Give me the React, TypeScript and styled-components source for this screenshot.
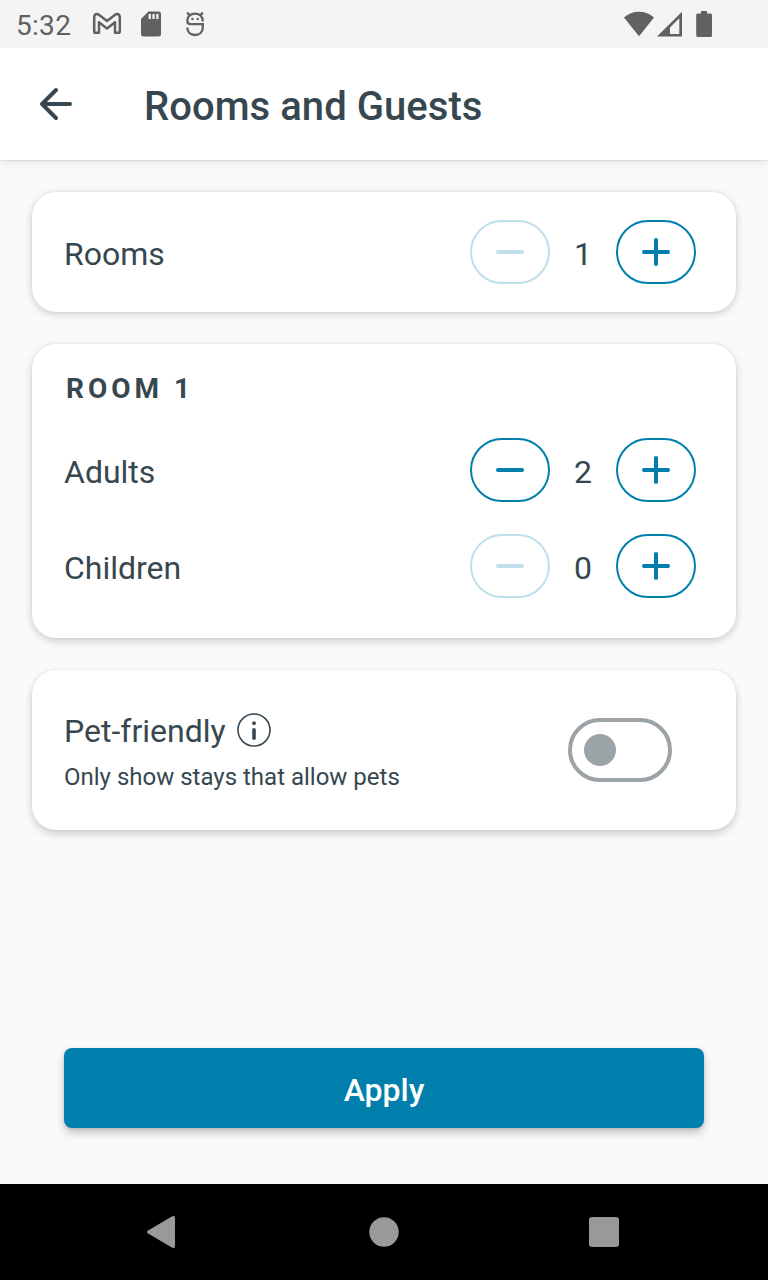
import React, { useState } from "react";
import styled, { createGlobalStyle, css } from "styled-components";

const ink = "#37474f";
const brand = "#007fad";
const statusInk = "#616161";

const GlobalStyle = createGlobalStyle`
  * { box-sizing: border-box; }
  body {
    margin: 0;
    background: #fafafa;
    color: ${ink};
    font-family: Roboto, "Liberation Sans", sans-serif;
  }
  button { font: inherit; padding: 0; cursor: pointer; }
  svg { display: block; }
`;

const Screen = styled.div`
  display: flex;
  flex-direction: column;
  width: 768px;
  height: 1280px;
  overflow: hidden;
`;

const StatusBar = styled.div`
  z-index: 1;
  display: flex;
  flex: none;
  justify-content: space-between;
  height: 48px;
  background: #f4f4f4;
  color: ${statusInk};
`;

const StatusGroup = styled.div<{ $end?: boolean }>`
  display: flex;
  align-items: center;
  padding: ${(p) => (p.$end ? "0 54px 0 0" : "0 0 0 16px")};
`;

const Clock = styled.span`
  width: 74px;
  padding-top: 4px;
  font-size: 28px;
  line-height: 34px;
  letter-spacing: 0.3px;
`;

const Header = styled.header`
  display: flex;
  flex: none;
  align-items: center;
  height: 112px;
  padding-left: 32px;
  background: #fff;
  box-shadow: 0 1px 1px rgba(0, 0, 0, 0.07), 0 2px 10px rgba(0, 0, 0, 0.09);
`;

const BackButton = styled.button`
  width: 48px;
  height: 48px;
  border: 0;
  background: none;
  color: ${ink};
`;

const Title = styled.h1`
  margin: 0 0 0 64px;
  padding-top: 6px;
  font-size: 40px;
  line-height: 48px;
  font-weight: 500;
  letter-spacing: 0.05px;
`;

const Content = styled.main`
  display: flex;
  flex: 1;
  flex-direction: column;
  gap: 32px;
  padding: 32px 32px 0;
`;

const Card = styled.section<{ $depth?: number }>`
  padding: 0 40px 0 32px;
  border-radius: 24px;
  background: #fff;
  box-shadow: 0 0 2px rgba(0, 0, 0, 0.09),
    0 ${(p) => p.$depth ?? 3}px 9px rgba(0, 0, 0, 0.18);
`;

const RoomsCard = styled(Card)`
  padding-top: 12px;
  padding-bottom: 12px;
`;

const RoomCard = styled(Card)`
  height: 294px;
  padding-top: 29px;
`;

const PetCard = styled(Card)`
  display: flex;
  align-items: center;
  justify-content: space-between;
  height: 160px;
  padding-right: 64px;
`;

const RoomTitle = styled.h2`
  margin: 0 0 17px 2px;
  font-size: 28px;
  line-height: 32px;
  font-weight: 700;
  letter-spacing: 4px;
`;

const CounterRow = styled.div`
  display: flex;
  align-items: center;
  justify-content: space-between;
  height: 96px;
`;

const Label = styled.span`
  padding-top: 4px;
  font-size: 32px;
  line-height: 38px;
`;

const Stepper = styled.div`
  display: flex;
  align-items: center;
`;

const Count = styled(Label)`
  width: 66px;
  text-align: center;
`;

const StepButton = styled.button`
  display: grid;
  place-items: center;
  width: 80px;
  height: 64px;
  border: 2px solid currentColor;
  border-radius: 32px;
  background: #fff;
  color: ${brand};
  &:disabled {
    color: #bfdfea;
    cursor: default;
  }
`;

const PetText = styled.div`
  display: flex;
  flex-direction: column;
  gap: 13px;
`;

const PetHeading = styled.div`
  display: flex;
  align-items: center;
  gap: 10px;
`;

const PetLabel = styled(Label)`
  padding-top: 2px;
`;

const Hint = styled.p`
  margin: 0;
  font-size: 24px;
  line-height: 28px;
`;

const Switch = styled.button<{ $on: boolean }>`
  display: flex;
  align-items: center;
  width: 104px;
  height: 64px;
  padding: 0 12px;
  border: 4px solid currentColor;
  border-radius: 32px;
  background: #fff;
  color: #9ba3a7;
  ${(p) =>
    p.$on &&
    css`
      justify-content: flex-end;
      color: ${brand};
    `}
`;

const Knob = styled.span`
  width: 32px;
  height: 32px;
  border-radius: 50%;
  background: currentColor;
`;

const Footer = styled.footer`
  flex: none;
  padding: 0 64px 56px;
`;

const ApplyButton = styled.button`
  width: 100%;
  height: 80px;
  padding-top: 4px;
  border: 0;
  border-radius: 8px;
  background: ${brand};
  color: #fff;
  font-size: 32px;
  font-weight: 500;
  box-shadow: 0 1px 3px rgba(0, 0, 0, 0.1), 0 5px 10px rgba(0, 0, 0, 0.22);
`;

const NavBar = styled.nav`
  display: flex;
  flex: none;
  align-items: center;
  justify-content: space-between;
  height: 96px;
  padding: 0 140px;
  background: #000;
`;

const NotificationIcons = () => (
  <svg width="120" height="48" viewBox="90 0 120 48" fill="none">
    <path
      d="M94.2 17.2C94.2 14.1 96.8 13.2 98.9 14.8L107 21L115.1 14.8C117.2 13.2 119.8 14.1 119.8 17.2V31.5Q119.8 32.8 118.5 32.8H115V22.3L107 28.4L99 22.3V32.8H95.5Q94.2 32.8 94.2 31.5Z"
      stroke="currentColor"
      strokeWidth="2.5"
      strokeLinejoin="round"
    />
    <path
      d="M148.4 11.5H158.5Q161 11.5 161 14V34Q161 36.5 158.5 36.5H143.5Q141 36.5 141 34V18.9Z"
      fill="currentColor"
    />
    <path d="M148.6 14h2.3v5h-2.3zM152.4 14h2.3v5h-2.3zM156.2 14h2.3v5h-2.3z" fill="#f4f4f4" />
    <g stroke="currentColor" strokeWidth="2.3">
      <path d="M202.8 21.4C202.8 16.5 199.5 13.6 195 13.6S187.3 16.5 187.3 20.5Q187.3 24.2 190.5 24.2H202.8V27.5C202.8 32.2 199.5 35 195 35S187.3 32.2 187.3 27.6" />
      <path d="M187.1 12.6L190 15.6M202.9 12.6L200 15.6" />
    </g>
    <circle cx="192.4" cy="19" r="1.2" fill="currentColor" />
    <circle cx="197.7" cy="19" r="1.2" fill="currentColor" />
  </svg>
);

const SystemIcons = () => (
  <svg width="94" height="48" viewBox="620 0 94 48" fill="currentColor">
    <path d="M639 36.3L624 17.6Q630.5 11.7 639 11.7T654 17.6Z" />
    <path d="M682 11.8V36.5H657ZM679.3 18.2L670 27.4V34H679.3Z" fillRule="evenodd" />
    <path d="M701 11H707V13.5H710.4Q712 13.5 712 15.1V35.4Q712 37 710.4 37H697.8Q696.2 37 696.2 35.4V15.1Q696.2 13.5 697.8 13.5H701Z" />
  </svg>
);

const ArrowIcon = () => (
  <svg width="48" height="48" viewBox="0 0 48 48" fill="none">
    <path
      d="M38 24H10M24 10L10 24L24 38"
      stroke="currentColor"
      strokeWidth="4"
      strokeLinecap="round"
      strokeLinejoin="round"
    />
  </svg>
);

const StepIcon = ({ plus }: { plus?: boolean }) => (
  <svg width="32" height="32" viewBox="0 0 32 32">
    <path
      d={plus ? "M4 16H28M16 4V28" : "M4 16H28"}
      stroke="currentColor"
      strokeWidth="4"
      strokeLinecap="round"
    />
  </svg>
);

const InfoIcon = () => (
  <svg width="36" height="36" viewBox="0 0 36 36">
    <circle cx="18" cy="18" r="16" fill="none" stroke="currentColor" strokeWidth="1.6" />
    <circle cx="18" cy="11.2" r="1.9" fill="currentColor" />
    <rect x="16.2" y="16" width="3.6" height="12" rx="1.8" fill="currentColor" />
  </svg>
);

const NavIcon = ({ kind }: { kind: "back" | "home" | "recent" }) => (
  <svg width="40" height="40" viewBox="0 0 40 40" fill="#999">
    {kind === "back" && (
      <path d="M7.6 18.8L32.3 4.3Q35 3 35 6V34Q35 37 32.3 35.7L7.6 21.2Q6 20 7.6 18.8Z" />
    )}
    {kind === "home" && <circle cx="20" cy="20" r="14.7" />}
    {kind === "recent" && <rect x="1" y="5" width="30" height="30" rx="3" />}
  </svg>
);

interface CounterProps {
  label: string;
  initial: number;
  min: number;
}

const Counter = ({ label, initial, min }: CounterProps) => {
  const [value, setValue] = useState(initial);
  return (
    <CounterRow>
      <Label>{label}</Label>
      <Stepper>
        <StepButton disabled={value <= min} onClick={() => setValue(value - 1)}>
          <StepIcon />
        </StepButton>
        <Count>{value}</Count>
        <StepButton onClick={() => setValue(value + 1)}>
          <StepIcon plus />
        </StepButton>
      </Stepper>
    </CounterRow>
  );
};

export default function App() {
  const [pets, setPets] = useState(false);
  return (
    <Screen>
      <GlobalStyle />
      <StatusBar>
        <StatusGroup>
          <Clock>5:32</Clock>
          <NotificationIcons />
        </StatusGroup>
        <StatusGroup $end>
          <SystemIcons />
        </StatusGroup>
      </StatusBar>
      <Header>
        <BackButton>
          <ArrowIcon />
        </BackButton>
        <Title>Rooms and Guests</Title>
      </Header>
      <Content>
        <RoomsCard $depth={2}>
          <Counter label="Rooms" initial={1} min={1} />
        </RoomsCard>
        <RoomCard>
          <RoomTitle>ROOM 1</RoomTitle>
          <Counter label="Adults" initial={2} min={1} />
          <Counter label="Children" initial={0} min={0} />
        </RoomCard>
        <PetCard $depth={4}>
          <PetText>
            <PetHeading>
              <PetLabel>Pet-friendly</PetLabel>
              <InfoIcon />
            </PetHeading>
            <Hint>Only show stays that allow pets</Hint>
          </PetText>
          <Switch $on={pets} onClick={() => setPets(!pets)}>
            <Knob />
          </Switch>
        </PetCard>
      </Content>
      <Footer>
        <ApplyButton>Apply</ApplyButton>
      </Footer>
      <NavBar>
        <NavIcon kind="back" />
        <NavIcon kind="home" />
        <NavIcon kind="recent" />
      </NavBar>
    </Screen>
  );
}
